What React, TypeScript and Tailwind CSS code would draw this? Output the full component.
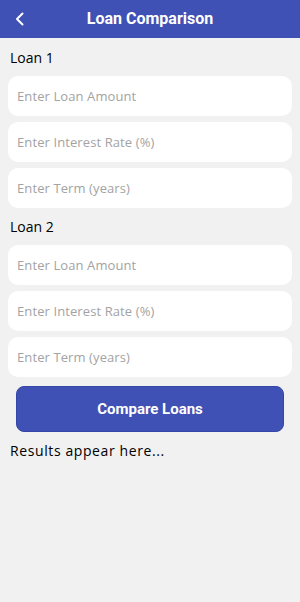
import React from "react";

const Field = ({ placeholder }: { placeholder: string }) => (
  <input
    placeholder={placeholder}
    className="h-[40px] w-full rounded-[10px] bg-white px-[9px] text-[13px] tracking-[0.1px] text-black outline-none placeholder:text-[#a3a3a3]"
  />
);

export default function App() {
  return (
    <div className="flex min-h-[602px] w-[300px] flex-col bg-[#f1f1f1] font-['Open_Sans',sans-serif]">
      <div className="relative flex h-[38px] items-center justify-center bg-[#3f51b5]">
        <svg className="absolute left-[12px] top-[11px]" width="16" height="16" viewBox="0 0 16 16" fill="none">
          <path d="M10.5 2.5L5 8l5.5 5.5" stroke="white" strokeWidth="2" strokeLinecap="round" strokeLinejoin="round" />
        </svg>
        <span className="font-['Roboto',sans-serif] text-[16px] font-bold text-white">Loan Comparison</span>
      </div>
      <div className="flex flex-col px-[8px]">
        <div className="pl-[2px] pt-[10px] pb-[8px] text-[14px] leading-[20px] text-black">Loan 1</div>
        <div className="flex flex-col gap-[6px]">
          <Field placeholder="Enter Loan Amount" />
          <Field placeholder="Enter Interest Rate (%)" />
          <Field placeholder="Enter Term (years)" />
        </div>
        <div className="pl-[2px] pt-[9px] pb-[8px] text-[14px] leading-[20px] text-black">Loan 2</div>
        <div className="flex flex-col gap-[6px]">
          <Field placeholder="Enter Loan Amount" />
          <Field placeholder="Enter Interest Rate (%)" />
          <Field placeholder="Enter Term (years)" />
        </div>
        <div className="px-[8px] pt-[9px]">
          <button className="flex h-[46px] w-full items-center justify-center rounded-[8px] border border-[#3545a8] bg-[#3f51b5] font-['Roboto',sans-serif] text-[15px] font-bold text-white">
            Compare Loans
          </button>
        </div>
        <div className="pl-[2px] pt-[9px] text-[14px] leading-[20px] tracking-[0.6px] text-black">Results appear here...</div>
      </div>
    </div>
  );
}
